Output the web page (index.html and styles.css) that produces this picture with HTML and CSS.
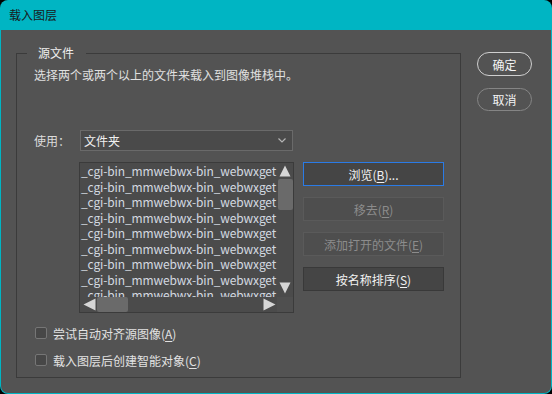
FILE: index.html
```html
<!DOCTYPE html>
<html lang="zh-CN">
<head>
<meta charset="utf-8">
<title>载入图层</title>
<link rel="stylesheet" href="styles.css">
</head>
<body>
<div class="win">
  <div class="titlebar">载入图层</div>
  <div class="client">
    <div class="group">
      <span class="legend">源文件</span>
      <p class="desc">选择两个或两个以上的文件来载入到图像堆栈中。</p>
      <div class="use-row">
        <span class="label">使用：</span>
        <div class="select">
          <span>文件夹</span>
          <svg class="chev" width="8" height="5" viewBox="0 0 8 5"><path d="M0.5 0.5 L4 4 L7.5 0.5" fill="none" stroke="#b4b4b4" stroke-width="1.2"/></svg>
        </div>
      </div>
      <div class="files-row">
        <div class="list">
          <div class="items">
            <div class="item">_cgi-bin_mmwebwx-bin_webwxget</div>
            <div class="item">_cgi-bin_mmwebwx-bin_webwxget</div>
            <div class="item">_cgi-bin_mmwebwx-bin_webwxget</div>
            <div class="item">_cgi-bin_mmwebwx-bin_webwxget</div>
            <div class="item">_cgi-bin_mmwebwx-bin_webwxget</div>
            <div class="item">_cgi-bin_mmwebwx-bin_webwxget</div>
            <div class="item">_cgi-bin_mmwebwx-bin_webwxget</div>
            <div class="item">_cgi-bin_mmwebwx-bin_webwxget</div>
            <div class="item">_cgi-bin_mmwebwx-bin_webwxget</div>
          </div>
          <div class="vscroll">
            <svg width="12" height="12" viewBox="0 0 12 12"><path d="M6 0.5 L11.5 11.5 L0.5 11.5 Z" fill="#d6d6d6"/></svg>
            <div class="vthumb"></div>
            <div class="vspace"></div>
            <svg width="12" height="12" viewBox="0 0 12 12"><path d="M0.5 0.5 L11.5 0.5 L6 11.5 Z" fill="#d6d6d6"/></svg>
          </div>
          <div class="hscroll">
            <svg width="13" height="13" viewBox="0 0 13 13"><path d="M0.5 6.5 L12.5 0.5 L12.5 12.5 Z" fill="#d6d6d6"/></svg>
            <div class="hthumb"></div>
            <div class="hspace"></div>
            <svg width="13" height="13" viewBox="0 0 13 13"><path d="M0.5 0.5 L12.5 6.5 L0.5 12.5 Z" fill="#d6d6d6"/></svg>
          </div>
          <div class="corner"></div>
        </div>
        <div class="actions">
          <div class="btn focus">浏览(<u>B</u>)...</div>
          <div class="btn disabled">移去(<u>R</u>)</div>
          <div class="btn disabled">添加打开的文件(<u>E</u>)</div>
          <div class="btn">按名称排序(<u>S</u>)</div>
        </div>
      </div>
      <div class="check first"><span class="box"></span><span>尝试自动对齐源图像(<u>A</u>)</span></div>
      <div class="check"><span class="box"></span><span>载入图层后创建智能对象(<u>C</u>)</span></div>
    </div>
    <div class="side">
      <div class="pill ok">确定</div>
      <div class="pill cancel">取消</div>
    </div>
  </div>
</div>
</body>
</html>
```

FILE: styles.css
```css
* { box-sizing: border-box; }
html, body { margin: 0; padding: 0; background: #000; }
body {
  font-family: "Noto Sans CJK SC", "Noto Sans", sans-serif;
  font-size: 12px;
  width: 552px;
  height: 394px;
  overflow: hidden;
}
.win {
  width: 552px;
  height: 394px;
  background: #00b5c3;
  border-radius: 8px;
  display: flex;
  flex-direction: column;
  overflow: hidden;
}
.titlebar {
  height: 30px;
  flex: none;
  padding-left: 9px;
  line-height: 30px;
  font-size: 12px;
  color: #1a1a1a;
}
.client {
  margin: 0 1px 1px 1px;
  flex: 1;
  background: #535353;
  border-bottom-left-radius: 7px;
  border-bottom-right-radius: 7px;
  display: flex;
  align-items: flex-start;
  padding: 23px 0 0 15px;
}
.group {
  position: relative;
  width: 445px;
  height: 325px;
  border: 1px solid #3b3b3b;
  padding: 13px 0 0 17px;
  color: #e4e4e4;
}
.legend {
  position: absolute;
  left: 10px;
  top: -9px;
  padding: 0 12px 0 11px;
  background: #535353;
  line-height: 16px;
  color: #eeeeee;
}
.desc {
  margin: 0;
  line-height: 16px;
  color: #e0e0e0;
}
.use-row {
  display: flex;
  align-items: center;
  margin-top: 47px;
  height: 21px;
}
.label {
  width: 46px;
  color: #dcdcdc;
}
.select {
  width: 213px;
  height: 21px;
  border: 1px solid #6a6a6a;
  background: #4a4a4a;
  display: flex;
  align-items: center;
  justify-content: space-between;
  padding: 0 6px 0 3px;
  color: #f0f0f0;
}
.chev { display: block; }
.files-row {
  display: flex;
  align-items: flex-start;
  margin-top: 11px;
  margin-left: 45px;
}
.list {
  width: 215px;
  height: 151px;
  border: 1px solid #3b3b3b;
  background: #4b4b4b;
  display: grid;
  grid-template-columns: 1fr 16px;
  grid-template-rows: 1fr 15px;
  overflow: hidden;
}
.items {
  overflow: hidden;
  padding-left: 1px;
  color: #d3d9e0;
}
.item {
  line-height: 15.5px;
  white-space: nowrap;
  letter-spacing: -0.12px;
}
.vscroll {
  display: flex;
  flex-direction: column;
  align-items: center;
  padding-top: 2px;
}
.vscroll svg { display: block; flex: none; }
.vthumb {
  width: 15px;
  height: 31px;
  margin-top: 2px;
  background: #6a6a6a;
  border-radius: 2px;
}
.vspace { flex: 1; }
.vscroll svg:last-child { margin-bottom: 3px; }
.hscroll {
  display: flex;
  align-items: center;
  padding-left: 3px;
}
.hscroll svg { display: block; flex: none; }
.hthumb {
  width: 31px;
  height: 15px;
  margin-left: 1px;
  background: #6a6a6a;
  border-radius: 2px;
}
.hspace { flex: 1; }
.hscroll svg:last-child { margin-right: 1px; }
.corner { background: #4f4f4f; }
.actions {
  margin-left: 9px;
  display: flex;
  flex-direction: column;
  gap: 11px;
}
.btn {
  width: 141px;
  height: 24px;
  border: 1px solid #393939;
  background: #454545;
  color: #f2f2f2;
  display: flex;
  align-items: center;
  justify-content: center;
}
.btn.focus { border-color: #2a7be6; }
.btn.disabled {
  background: #4e4e4e;
  border-color: #5a5a5a;
  color: #8c8c8c;
}
u { text-underline-offset: 2px; }
.check {
  display: flex;
  align-items: center;
  height: 16px;
  margin-top: 11px;
  color: #e2e2e2;
}
.check.first { margin-top: 12px; }
.box {
  width: 12px;
  height: 12px;
  margin-left: 1px;
  margin-right: 6px;
  border: 1px solid #767676;
  border-radius: 2px;
  background: #474747;
}
.side {
  margin-left: 16px;
  margin-top: -1px;
  display: flex;
  flex-direction: column;
  gap: 12px;
}
.pill {
  width: 55px;
  height: 24px;
  border-radius: 12px;
  display: flex;
  align-items: center;
  justify-content: center;
  color: #f4f4f4;
}
.pill.ok { border: 1px solid #cfcfcf; }
.pill.cancel { border: 1px solid #858585; height: 23px; }
```
